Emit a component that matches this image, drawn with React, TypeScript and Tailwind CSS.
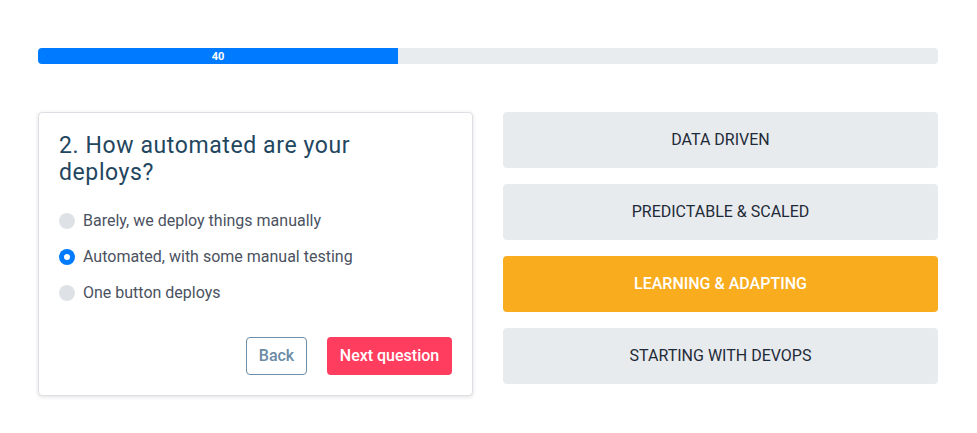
import React from "react";

const options = [
  { label: "Barely, we deploy things manually", checked: false },
  { label: "Automated, with some manual testing", checked: true },
  { label: "One button deploys", checked: false },
];

const stages = [
  { label: "DATA DRIVEN", active: false },
  { label: "PREDICTABLE & SCALED", active: false },
  { label: "LEARNING & ADAPTING", active: true },
  { label: "STARTING WITH DEVOPS", active: false },
];

export default function App() {
  return (
    <div
      className="w-[977px] h-[433px] bg-white"
      style={{ fontFamily: "Roboto, 'Liberation Sans', sans-serif" }}
    >
      <div className="pl-[38px] pt-[48px] w-[938px]">
        <div className="h-4 w-[900px] rounded bg-[#e9ecef] overflow-hidden flex">
          <div className="h-4 w-[360px] bg-[#007bff] flex items-center justify-center text-white text-[11px] font-bold leading-none">
            40
          </div>
        </div>

        <div className="mt-[48px] flex gap-[30px]">
          <div className="w-[435px] h-[284px] border border-[#dcdfe3] rounded bg-white shadow-[0_1px_4px_rgba(0,0,0,0.12)] px-5 pt-[19px] pb-5 flex flex-col">
            <h2 className="text-[23px] leading-[27px] tracking-[0.6px] text-[#23465f] font-normal w-[360px]">
              2. How automated are your deploys?
            </h2>
            <div className="mt-[23px] flex flex-col gap-3">
              {options.map((o) => (
                <div key={o.label} className="flex items-center h-6 gap-2">
                  {o.checked ? (
                    <span className="w-4 h-4 rounded-full bg-[#007bff] flex items-center justify-center">
                      <span className="w-[6px] h-[6px] rounded-full bg-white" />
                    </span>
                  ) : (
                    <span className="w-4 h-4 rounded-full bg-[#dee2e6]" />
                  )}
                  <span className="text-[16px] text-[#4b5261]">{o.label}</span>
                </div>
              ))}
            </div>
            <div className="mt-auto flex justify-end gap-5">
              <button className="h-[38px] w-[61px] rounded border border-[#6c8ea8] text-[#6b8ba5] text-[16px] font-medium bg-white">
                Back
              </button>
              <button className="h-[38px] w-[125px] rounded bg-[#ff3e5f] text-white text-[16px] font-medium">
                Next question
              </button>
            </div>
          </div>

          <div className="w-[435px] flex flex-col gap-4">
            {stages.map((s) => (
              <div
                key={s.label}
                className={
                  s.active
                    ? "h-14 rounded bg-[#f8ac1e] text-white font-medium text-[16px] flex items-center justify-center"
                    : "h-14 rounded bg-[#e8ebee] text-[#1e2a38] text-[16px] flex items-center justify-center"
                }
              >
                {s.label}
              </div>
            ))}
          </div>
        </div>
      </div>
    </div>
  );
}
